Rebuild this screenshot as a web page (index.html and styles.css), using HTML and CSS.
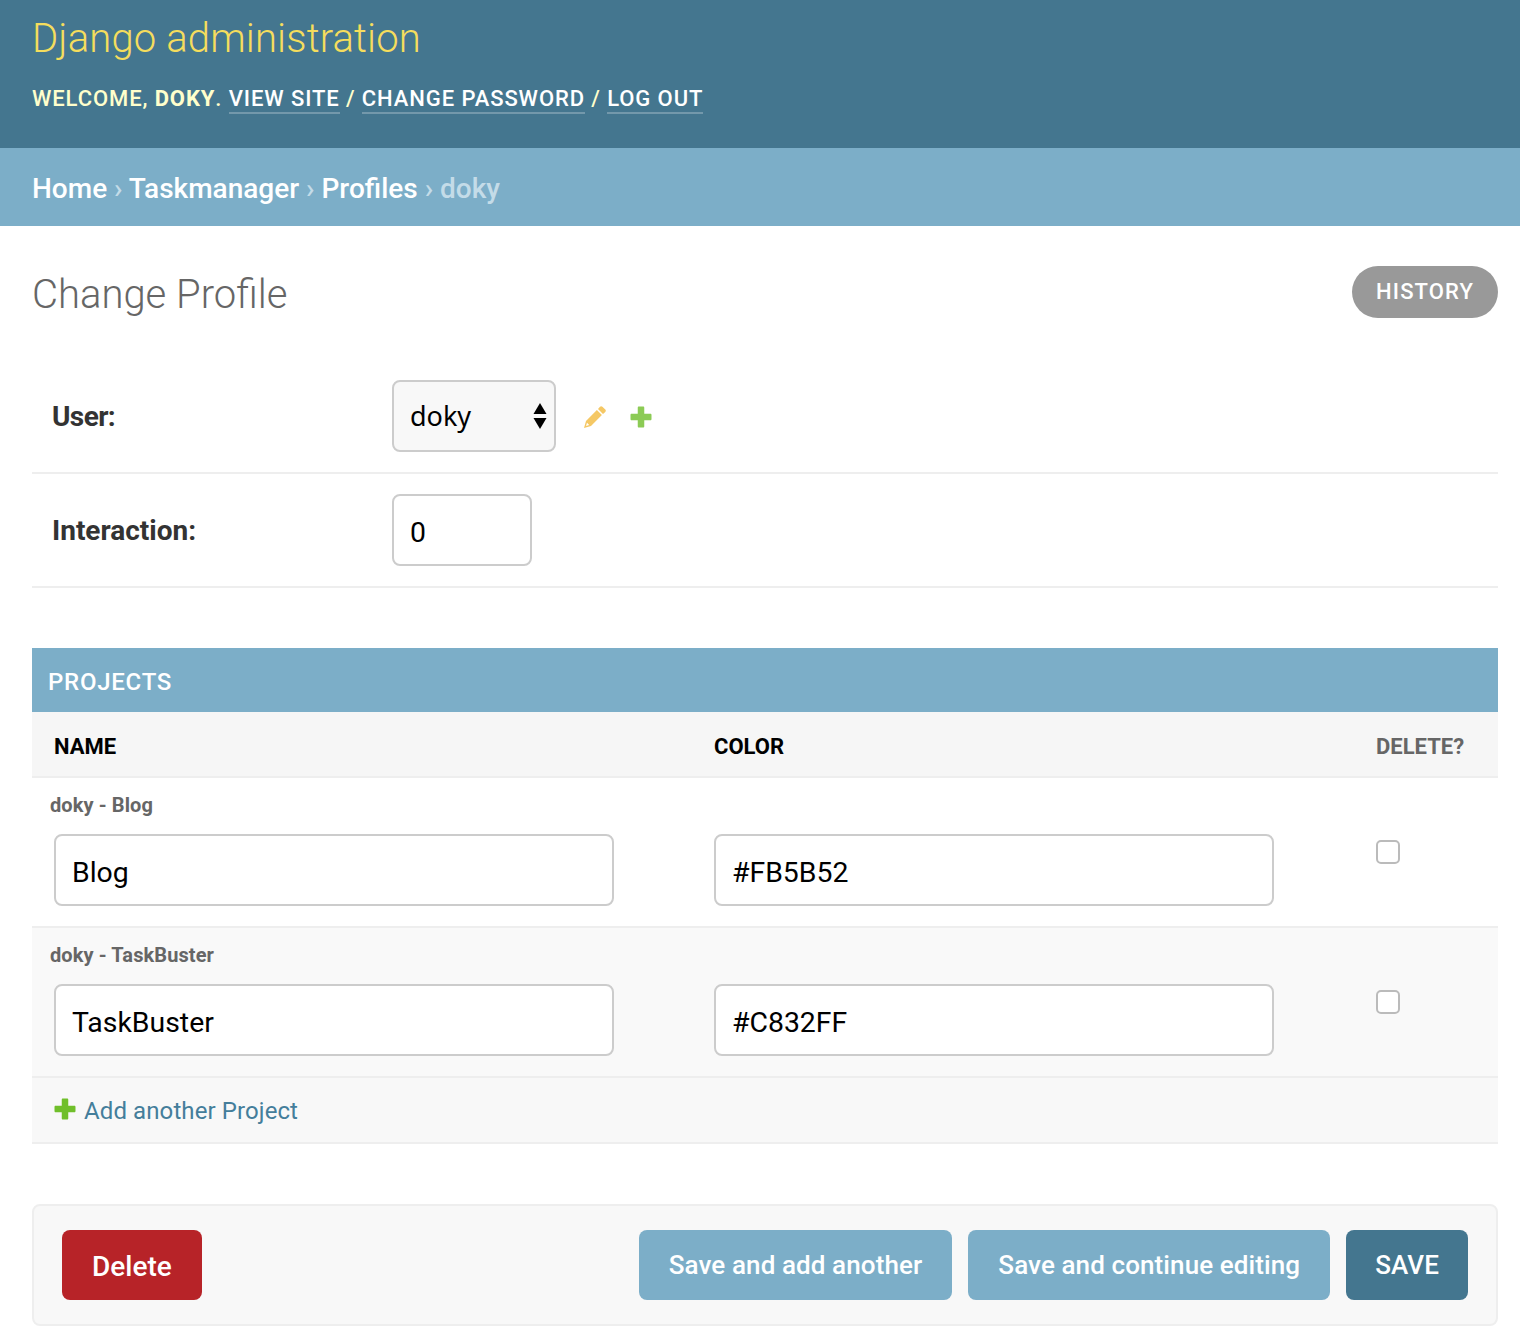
FILE: index.html
```html
<!DOCTYPE html>
<html lang="en">
<head>
    <meta charset="UTF-8">
    <title>Change Profile | Django site admin</title>
    <link rel="stylesheet" href="styles.css">
</head>
<body>
    <div id="header">
        <h1 class="branding">Django administration</h1>
        <div class="user-tools">
            Welcome, <strong>doky</strong>.
            <a href="#">View site</a> /
            <a href="#">Change password</a> /
            <a href="#">Log out</a>
        </div>
    </div>

    <div class="breadcrumbs">
        <a href="#">Home</a> › <a href="#">Taskmanager</a> › <a href="#">Profiles</a> › doky
    </div>

    <div id="content">
        <div class="title-row">
            <h2 class="page-title">Change Profile</h2>
            <a class="history" href="#">History</a>
        </div>

        <div class="form-row">
            <label class="field-label label-user">User:</label>
            <div class="select-wrap">
                <select class="user-select">
                    <option>doky</option>
                </select>
                <svg class="select-arrows" width="14" height="26" viewBox="0 0 14 26">
                    <path d="M7 0L13.5 11H.5z"/>
                    <path d="M7 26L.5 15h13z"/>
                </svg>
            </div>
            <svg class="icon-pencil" width="24" height="24" viewBox="0 0 24 24">
                <path d="M15 4l2-2.300c.7-.7 1.700-.7 2.400 0l2.900 2.900c.7.7.7 1.700 0 2.400L20 9z"/>
                <path d="M13.900 5.100l5 5L8 21 1 23l2-7zM4 17.800l2.200 2.200-3.200 1z" fill-rule="evenodd"/>
            </svg>
            <svg class="icon-plus" width="22" height="22" viewBox="0 0 22 22">
                <path d="M7.750 1.500c0-.5.5-1 1-1h4.500c.5 0 1 .5 1 1v6.250h6.250c.5 0 1 .5 1 1v4.500c0 .5-.5 1-1 1h-6.250v6.250c0 .5-.5 1-1 1h-4.500c-.5 0-1-.5-1-1v-6.250H1.500c-.5 0-1-.5-1-1v-4.500c0-.5.5-1 1-1h6.250z"/>
            </svg>
        </div>
        <div class="form-row">
            <label class="field-label">Interaction:</label>
            <input class="text-input number-input" type="text" value="0">
        </div>

        <div class="inline-group">
            <h2 class="inline-title">Projects</h2>
            <div class="inline-head">
                <div class="col-name">Name</div>
                <div class="col-color">Color</div>
                <div class="col-delete">Delete?</div>
            </div>

            <div class="inline-row">
                <div class="original">doky - Blog</div>
                <div class="inline-fields">
                    <div class="col-name"><input class="text-input wide-input" type="text" value="Blog"></div>
                    <div class="col-color"><input class="text-input wide-input" type="text" value="#FB5B52"></div>
                    <div class="col-delete"><span class="checkbox"></span></div>
                </div>
            </div>

            <div class="inline-row alt">
                <div class="original">doky - TaskBuster</div>
                <div class="inline-fields">
                    <div class="col-name"><input class="text-input wide-input" type="text" value="TaskBuster"></div>
                    <div class="col-color"><input class="text-input wide-input" type="text" value="#C832FF"></div>
                    <div class="col-delete"><span class="checkbox"></span></div>
                </div>
            </div>

            <div class="add-row">
                <svg class="icon-add" width="22" height="22" viewBox="0 0 22 22">
                    <path d="M7.750 1.500c0-.5.5-1 1-1h4.500c.5 0 1 .5 1 1v6.250h6.250c.5 0 1 .5 1 1v4.500c0 .5-.5 1-1 1h-6.250v6.250c0 .5-.5 1-1 1h-4.500c-.5 0-1-.5-1-1v-6.250H1.500c-.5 0-1-.5-1-1v-4.500c0-.5.5-1 1-1h6.250z"/>
                </svg>
                <a href="#">Add another Project</a>
            </div>
        </div>

        <div class="submit-row">
            <a class="btn btn-delete" href="#">Delete</a>
            <div class="submit-right">
                <a class="btn btn-light" href="#">Save and add another</a>
                <a class="btn btn-light" href="#">Save and continue editing</a>
                <a class="btn btn-save" href="#">Save</a>
            </div>
        </div>
    </div>
</body>
</html>
```

FILE: styles.css
```css
* {
    box-sizing: border-box;
}

body {
    margin: 0;
    font-family: Roboto, "Liberation Sans", sans-serif;
    color: #333;
    background: #fff;
}

a {
    text-decoration: none;
}

/* header */
#header {
    height: 148px;
    padding: 17px 32px 0;
    background: #44768f;
    color: #ffc;
}

.branding {
    margin: 0;
    font-size: 40px;
    line-height: 44px;
    font-weight: 300;
    letter-spacing: 0.15px;
    color: #f5dd5d;
}

.user-tools {
    margin-top: 22px;
    font-size: 22px;
    line-height: 32px;
    font-weight: 500;
    letter-spacing: 0.9px;
    text-transform: uppercase;
}

.user-tools strong {
    font-weight: 700;
}

.user-tools a {
    color: #fff;
    padding-bottom: 1px;
    border-bottom: 2px solid rgba(255, 255, 255, 0.25);
}

.breadcrumbs {
    height: 78px;
    padding: 0 32px;
    background: #7caec8;
    color: #c4dce8;
    font-size: 28px;
    line-height: 82px;
    font-weight: 500;
}

.breadcrumbs a {
    color: #fff;
}

/* content */
#content {
    padding: 40px 22px 0 32px;
}

.title-row {
    display: flex;
    justify-content: space-between;
    height: 94px;
}

.page-title {
    margin: 0;
    font-size: 40px;
    line-height: 58px;
    font-weight: 300;
    color: #666;
}

.history {
    height: 52px;
    padding: 0 24px;
    border-radius: 26px;
    background: #999;
    color: #fff;
    font-size: 22px;
    line-height: 52px;
    font-weight: 500;
    letter-spacing: 1.1px;
    text-transform: uppercase;
}

.form-row {
    display: flex;
    align-items: center;
    height: 114px;
    padding: 0 20px;
    border-bottom: 2px solid #eee;
}

.field-label {
    width: 340px;
    font-size: 28px;
    font-weight: 700;
    color: #333;
}

.label-user {
    letter-spacing: -0.6px;
}

.text-input,
.user-select {
    height: 72px;
    padding: 4px 16px 0;
    border: 2px solid #ccc;
    border-radius: 8px;
    background: #fff;
    color: #000;
    font-family: Roboto, sans-serif;
    font-size: 28.4px;
}

.number-input {
    width: 140px;
}

.wide-input {
    width: 560px;
}

.select-wrap {
    position: relative;
    width: 164px;
}

.user-select {
    display: block;
    width: 100%;
    padding: 0 16px 2px;
    appearance: none;
    background: #f8f8f8;
    font-family: "Noto Sans", sans-serif;
    font-size: 27px;
}

.select-arrows {
    position: absolute;
    top: 23px;
    right: 9px;
    fill: #000;
}

.icon-pencil {
    margin: 2px 0 0 27px;
    fill: #f5c865;
}

.icon-plus {
    margin: 2px 0 0 23px;
    fill: #70bf2b;
    opacity: 0.8;
}

/* inline group */
.inline-group {
    margin-top: 60px;
}

.inline-title {
    margin: 0;
    height: 64px;
    padding: 0 16px;
    background: #7caec8;
    color: #fff;
    font-size: 24px;
    line-height: 68px;
    font-weight: 500;
    letter-spacing: 0.75px;
    text-transform: uppercase;
}

.inline-head {
    display: flex;
    height: 66px;
    padding-left: 22px;
    background: #f6f6f6;
    border-bottom: 2px solid #eee;
    font-size: 22px;
    line-height: 70px;
    font-weight: 700;
    text-transform: uppercase;
    color: #000;
}

.inline-head .col-delete {
    color: #666;
}

.col-name {
    width: 660px;
}

.col-color {
    width: 662px;
}

.inline-row {
    height: 150px;
    padding: 15px 0 0 18px;
    border-bottom: 2px solid #eee;
}

.inline-row.alt {
    background: #f9f9f9;
}

.original {
    font-size: 20px;
    line-height: 24px;
    font-weight: 700;
    letter-spacing: 0.1px;
    color: #666;
}

.inline-fields {
    display: flex;
    margin-top: 17px;
    padding-left: 4px;
}

.checkbox {
    display: block;
    width: 24px;
    height: 24px;
    margin-top: 6px;
    border: 2px solid #bbb;
    border-radius: 5px;
    background: #fff;
}

.add-row {
    display: flex;
    align-items: center;
    height: 66px;
    padding-left: 22px;
    background: #f8f8f8;
    border-bottom: 2px solid #eee;
    font-size: 24px;
    letter-spacing: 0.1px;
}

.add-row a {
    margin: 2px 0 0 8px;
    color: #447e9b;
}

.icon-add {
    fill: #70bf2b;
    margin-top: -2px;
}

/* buttons */
.submit-row {
    display: flex;
    justify-content: space-between;
    height: 122px;
    margin-top: 60px;
    padding: 24px 28px;
    background: #f8f8f8;
    border: 2px solid #eee;
    border-radius: 8px;
}

.submit-right {
    display: flex;
    gap: 16px;
}

.btn {
    height: 70px;
    padding: 0 30px;
    border-radius: 8px;
    color: #fff;
    font-size: 26px;
    line-height: 70px;
    font-weight: 500;
    letter-spacing: 0.1px;
}

.btn-delete {
    width: 140px;
    background: #b72328;
    font-size: 28px;
    line-height: 74px;
    letter-spacing: 0;
}

.btn-light {
    background: #7caec8;
}

.btn-save {
    padding: 0 29px;
    background: #44768f;
    text-transform: uppercase;
}
```
